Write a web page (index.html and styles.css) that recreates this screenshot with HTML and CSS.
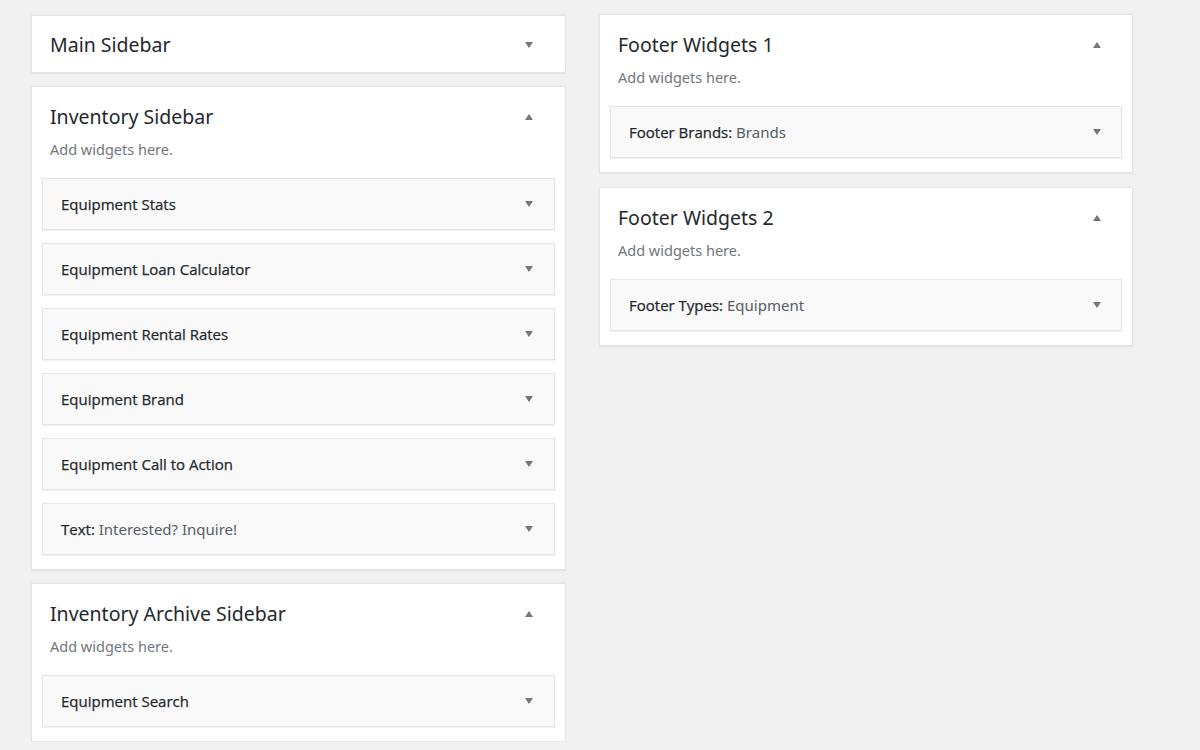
FILE: index.html
```html
<!DOCTYPE html>
<html>
<head>
<meta charset="utf-8">
<link rel="stylesheet" href="styles.css">
</head>
<body>
<div class="page">
  <div class="col left">
    <section class="sidebar collapsed">
      <div class="sb-head"><h2>Main Sidebar</h2><span class="arrow down"></span></div>
    </section>
    <section class="sidebar">
      <div class="sb-head"><h2>Inventory Sidebar</h2><span class="arrow up"></span></div>
      <p class="desc">Add widgets here.</p>
      <div class="widgets">
        <div class="widget"><h3>Equipment Stats</h3><span class="arrow down"></span></div>
        <div class="widget"><h3>Equipment Loan Calculator</h3><span class="arrow down"></span></div>
        <div class="widget"><h3>Equipment Rental Rates</h3><span class="arrow down"></span></div>
        <div class="widget"><h3>Equipment Brand</h3><span class="arrow down"></span></div>
        <div class="widget"><h3>Equipment Call to Action</h3><span class="arrow down"></span></div>
        <div class="widget"><h3>Text:<span class="in"> Interested? Inquire!</span></h3><span class="arrow down"></span></div>
      </div>
    </section>
    <section class="sidebar">
      <div class="sb-head"><h2>Inventory Archive Sidebar</h2><span class="arrow up"></span></div>
      <p class="desc">Add widgets here.</p>
      <div class="widgets">
        <div class="widget"><h3>Equipment Search</h3><span class="arrow down"></span></div>
      </div>
    </section>
  </div>
  <div class="col right">
    <section class="sidebar">
      <div class="sb-head"><h2>Footer Widgets 1</h2><span class="arrow up"></span></div>
      <p class="desc">Add widgets here.</p>
      <div class="widgets">
        <div class="widget"><h3>Footer Brands:<span class="in"> Brands</span></h3><span class="arrow down"></span></div>
      </div>
    </section>
    <section class="sidebar">
      <div class="sb-head"><h2>Footer Widgets 2</h2><span class="arrow up"></span></div>
      <p class="desc">Add widgets here.</p>
      <div class="widgets">
        <div class="widget"><h3>Footer Types:<span class="in"> Equipment</span></h3><span class="arrow down"></span></div>
      </div>
    </section>
  </div>
</div>
</body>
</html>
```
FILE: styles.css
```css
html, body {
  margin: 0;
  padding: 0;
  background: #f1f1f1;
  font-family: "Noto Sans", "Open Sans", "Liberation Sans", sans-serif;
  color: #23282d;
}
.page {
  display: flex;
  align-items: flex-start;
  gap: 33px;
  padding: 14px 0 0 31px;
}
.col {
  width: 535px;
  display: flex;
  flex-direction: column;
  gap: 13px;
}
.col.left {
  margin-top: 1px;
}
.col.right {
  width: 534px;
  gap: 14px;
}
.sidebar {
  background: #fff;
  border: 1px solid #e5e5e5;
  box-shadow: 0 1px 1px rgba(0,0,0,0.05), 0 -1px 2px rgba(0,0,0,0.03);
  padding: 0 10px 14px;
}
.sidebar.collapsed {
  padding-bottom: 12px;
}
.sb-head {
  display: flex;
  align-items: center;
  justify-content: space-between;
  padding: 15px 22px 0 8px;
}
.col.right .sb-head {
  padding-right: 21px;
}
.sidebar.collapsed .sb-head {
  padding-top: 14px;
}
h2 {
  margin: 0;
  font-size: 19.5px;
  font-weight: 400;
  line-height: 30px;
  color: #23282d;
}
.desc {
  margin: 5px 0 0 8px;
  font-size: 14.5px;
  line-height: 24px;
  color: #72777c;
}
.widgets {
  margin-top: 17px;
  display: flex;
  flex-direction: column;
  gap: 13px;
}
.widget {
  background: #f9f9f9;
  border: 1px solid #e5e5e5;
  box-shadow: 0 1px 1px rgba(0,0,0,0.05);
  display: flex;
  align-items: center;
  justify-content: space-between;
  height: 50px;
  padding: 0 21px 0 18px;
}
.col.right .widget {
  padding-right: 20px;
}
h3 {
  margin: 0;
  font-family: "Open Sans", "Noto Sans", sans-serif;
  font-size: 15px;
  font-weight: 400;
  color: #23282d;
  -webkit-text-stroke: 0.25px #23282d;
}
h3 .in {
  font-family: "Noto Sans", "Open Sans", sans-serif;
  font-weight: 400;
  color: #555d66;
  -webkit-text-stroke: 0;
}
.arrow {
  width: 0;
  height: 0;
  border-left: 4.5px solid transparent;
  border-right: 4.5px solid transparent;
}
.arrow.down {
  border-top: 6px solid #72777c;
}
.arrow.up {
  border-bottom: 6px solid #72777c;
}
```
